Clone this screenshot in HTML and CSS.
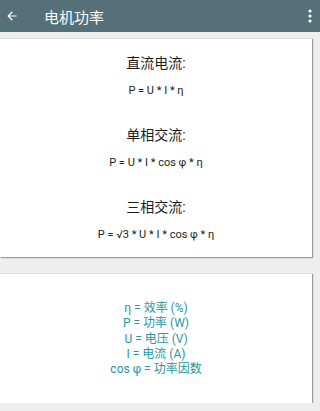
FILE: index.html
```html
<!DOCTYPE html>
<html>
<head>
    <meta charset="utf-8">
    <title>电机功率</title>
    <link rel="stylesheet" href="styles.css">
</head>
<body>

<div class="toolbar">
  <svg class="back" width="14" height="14" viewBox="0 0 24 24">
    <path d="M20 11H7.83l5.59-5.59L12 4l-8 8 8 8 1.41-1.41L7.83 13H20v-2z" fill="#ffffff"/>
  </svg>
  <span class="title">电机功率</span>
  <svg class="menu" width="4" height="14" viewBox="0 0 4 14">
    <circle cx="2" cy="2" r="1.6" fill="#ffffff"/>
    <circle cx="2" cy="7" r="1.6" fill="#ffffff"/>
    <circle cx="2" cy="12" r="1.6" fill="#ffffff"/>
  </svg>
</div>

<div class="card formulas">
  <div class="section">
    <div class="head">直流电流:</div>
    <div class="formula">P = U * I * η</div>
  </div>
  <div class="section">
    <div class="head">单相交流:</div>
    <div class="formula">P = U * I * cos φ * η</div>
  </div>
  <div class="section">
    <div class="head">三相交流:</div>
    <div class="formula">P = √3 * U * I * cos φ * η</div>
  </div>
</div>

<div class="card legend">
  <div>η = 效率 (%)</div>
  <div>P = 功率 (W)</div>
  <div>U = 电压 (V)</div>
  <div>I = 电流 (A)</div>
  <div>cos φ = 功率因数</div>
</div>

</body>
</html>
```

FILE: styles.css
```css
body {
  margin: 0;
  background-color: #eeeeee;
  color: #1c1c1c;
  font-family: Roboto, "Noto Sans CJK SC", sans-serif;
}

.toolbar {
  height: 32px;
  background-color: #56707a;
  display: flex;
  align-items: center;
  padding: 0 8px 0 5px;
  color: #ffffff;
}

.toolbar .title {
  margin-left: 25px;
  font-size: 15px;
  flex: 1;
}

.card {
  width: 312px;
  background-color: #ffffff;
  border-top: 1px solid #dddddd;
  box-shadow: 1px 1px 1px #9a9a9a;
  text-align: center;
  box-sizing: border-box;
}

.formulas {
  margin-top: 6px;
  height: 219px;
  padding: 14px 0 13px;
  display: flex;
  flex-direction: column;
  gap: 26px;
}

.section .head {
  font-size: 14px;
  line-height: 20px;
  margin-bottom: 10px;
}

.section .formula {
  font-size: 11px;
  line-height: 16px;
}

.legend {
  margin-top: 16px;
  height: 130px;
  padding-top: 27px;
  color: #2a96a0;
  font-size: 12px;
  line-height: 15.3px;
}
```
